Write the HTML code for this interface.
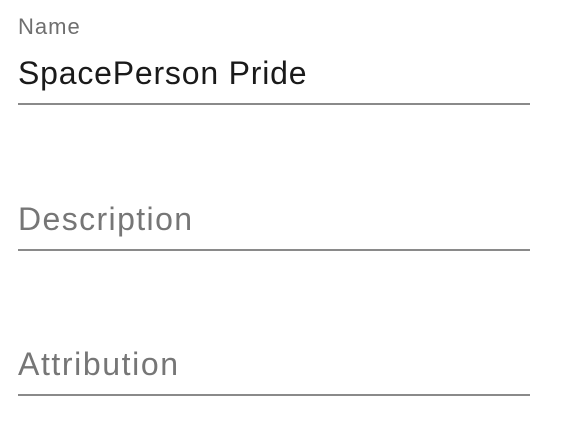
<!DOCTYPE html>
<html><head><style>
html,body{margin:0;padding:0;background:#fff;width:568px;height:426px;overflow:hidden;font-family:"Liberation Sans",Arial,sans-serif;}
.t{position:absolute;left:18px;white-space:nowrap;line-height:1.15;}
.big{font-size:32px;}
.line{position:absolute;left:18px;width:512px;height:2px;background:#8a8a8a;}
</style></head><body>
<div class="t" style="top:14px;font-size:22px;letter-spacing:1px;color:#6f6f6f;">Name</div>
<div class="t big" style="top:55px;letter-spacing:0.8px;color:#1a1a1a;">SpacePerson Pride</div>
<div class="line" style="top:103px;"></div>
<div class="t big" style="top:201px;letter-spacing:1.4px;color:#767676;">Description</div>
<div class="line" style="top:249px;"></div>
<div class="t big" style="top:346px;letter-spacing:1.6px;color:#767676;">Attribution</div>
<div class="line" style="top:394px;"></div>
</body></html>
